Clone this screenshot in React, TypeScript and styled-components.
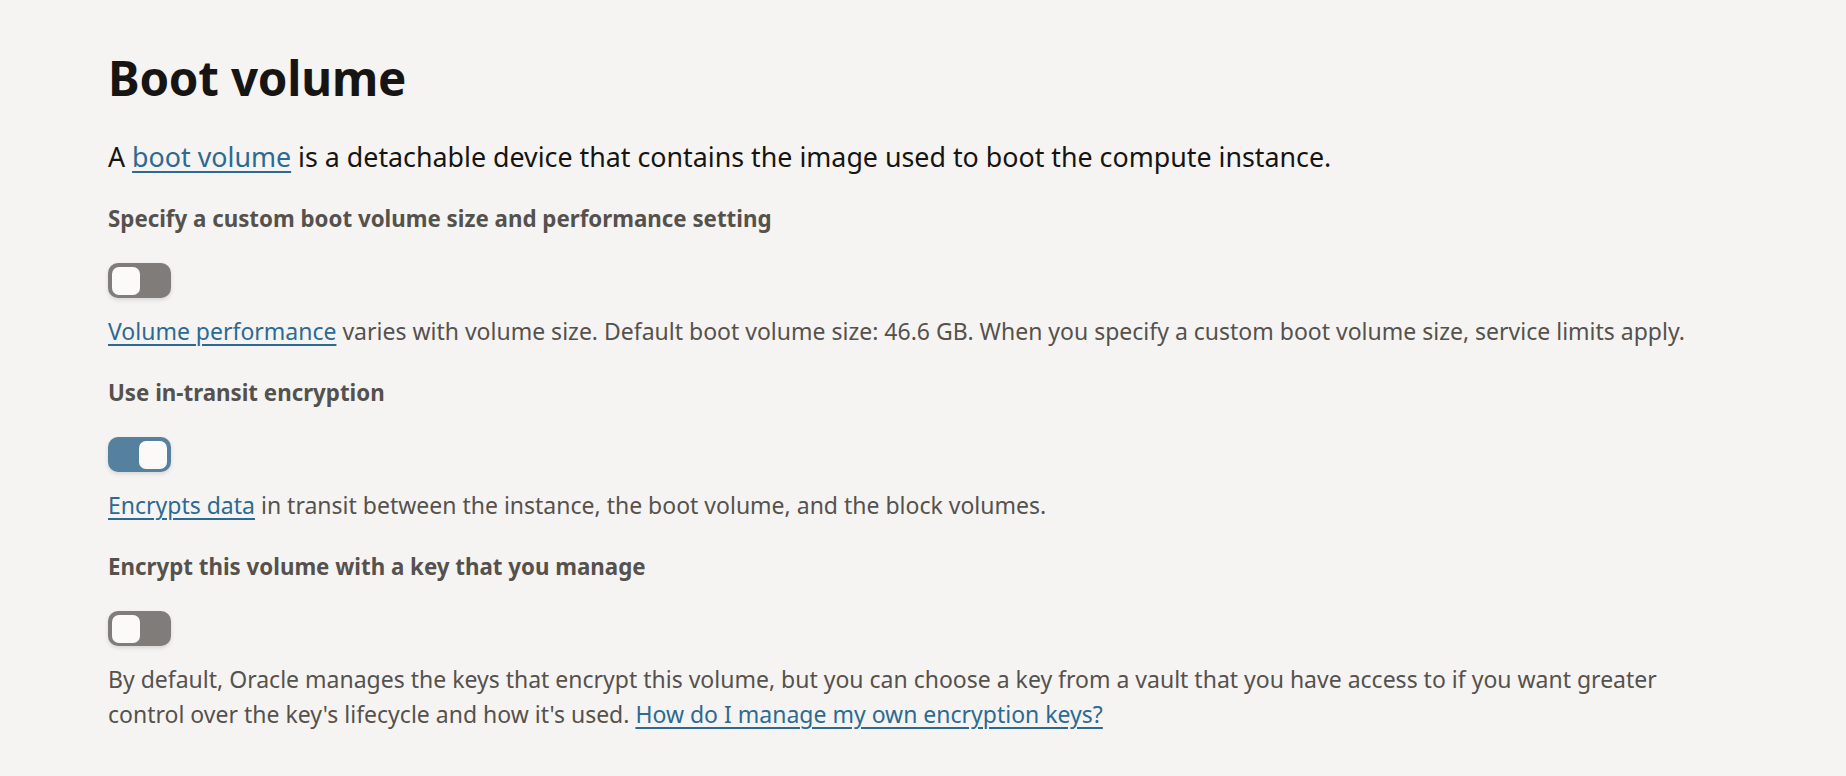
import React from "react";
import styled, { createGlobalStyle } from "styled-components";

const Global = createGlobalStyle`
  html, body {
    margin: 0;
    padding: 0;
    background: #f5f4f2;
  }
  body {
    font-family: "Noto Sans", "Open Sans", sans-serif;
    -webkit-font-smoothing: antialiased;
  }
`;

const Page = styled.main`
  padding: 49px 40px 40px 108px;
  display: flex;
  flex-direction: column;
  max-width: 1612px;
`;

const Title = styled.h1`
  margin: 0;
  font-size: 47.5px;
  line-height: 58px;
  font-weight: 700;
  color: #161513;
  letter-spacing: -0.2px;
`;

const Intro = styled.p`
  margin: 33px 0 0;
  font-size: 26.8px;
  line-height: 34px;
  color: #161513;
`;

const Fields = styled.div`
  margin-top: 31px;
  display: flex;
  flex-direction: column;
  gap: 30px;
`;

const Field = styled.div`
  display: flex;
  flex-direction: column;
  align-items: flex-start;
`;

const Label = styled.div`
  font-size: 22.3px;
  line-height: 28px;
  font-weight: 700;
  color: #55514d;
`;

const Switch = styled.button<{ $on: boolean }>`
  margin: 30px 0 16px;
  width: 63px;
  height: 35px;
  border: none;
  border-radius: 10px;
  background: ${(p) => (p.$on ? "#55809e" : "#807c79")};
  display: flex;
  align-items: center;
  justify-content: ${(p) => (p.$on ? "flex-end" : "flex-start")};
  padding: 0 4px;
  box-shadow: 0 2px 4px rgba(0, 0, 0, 0.12);
  cursor: pointer;
`;

const Thumb = styled.span`
  width: 28px;
  height: 28px;
  border-radius: 7px;
  background: #fbfaf9;
`;

const Help = styled.p`
  margin: 0;
  font-size: 23px;
  line-height: 35px;
  color: #55514d;
`;

const Link = styled.a`
  color: #2c6a92;
  text-decoration: underline;
  text-decoration-thickness: 2px;
  text-underline-offset: 4px;
`;

const Toggle = ({ on }: { on: boolean }) => (
  <Switch $on={on} role="switch" aria-checked={on}>
    <Thumb />
  </Switch>
);

export default function App() {
  return (
    <>
      <Global />
      <Page>
        <Title>Boot volume</Title>
        <Intro>
          A <Link href="#">boot volume</Link> is a detachable device that contains the image used to boot the compute
          instance.
        </Intro>
        <Fields>
          <Field>
            <Label>Specify a custom boot volume size and performance setting</Label>
            <Toggle on={false} />
            <Help>
              <Link href="#">Volume performance</Link> varies with volume size. Default boot volume size: 46.6 GB. When you
              specify a custom boot volume size, service limits apply.
            </Help>
          </Field>
          <Field>
            <Label>Use in-transit encryption</Label>
            <Toggle on={true} />
            <Help>
              <Link href="#">Encrypts data</Link> in transit between the instance, the boot volume, and the block volumes.
            </Help>
          </Field>
          <Field>
            <Label>Encrypt this volume with a key that you manage</Label>
            <Toggle on={false} />
            <Help>
              By default, Oracle manages the keys that encrypt this volume, but you can choose a key from a vault that you
              have access to if you want greater control over the key's lifecycle and how it's used.{" "}
              <Link href="#">How do I manage my own encryption keys?</Link>
            </Help>
          </Field>
        </Fields>
      </Page>
    </>
  );
}
